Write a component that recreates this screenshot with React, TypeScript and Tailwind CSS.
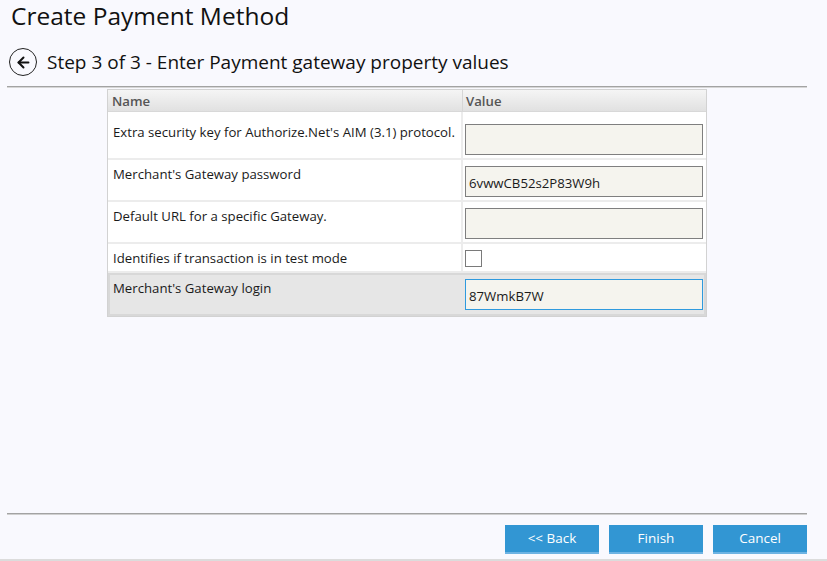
import { ArrowLeft } from "lucide-react";

const rows = [
  { name: "Extra security key for Authorize.Net's AIM (3.1) protocol.", value: "", kind: "text", first: true },
  { name: "Merchant's Gateway password", value: "6vwwCB52s2P83W9h", kind: "text" },
  { name: "Default URL for a specific Gateway.", value: "", kind: "text" },
  { name: "Identifies if transaction is in test mode", value: "", kind: "check" },
  { name: "Merchant's Gateway login", value: "87WmkB7W", kind: "text", selected: true },
];

function Row({ row }: { row: (typeof rows)[number] }) {
  const cellTop = row.first ? "pt-[12px]" : "pt-[6px]";
  if (row.kind === "check") {
    return (
      <div className="flex h-[29px] border-b-2 border-[#ececec] bg-white">
        <div className="w-[355px] shrink-0 border-r-2 border-[#ececec] pl-[5px] pt-[6px]">{row.name}</div>
        <div className="pl-[2px] pt-[6px]">
          <div className="h-[17px] w-[17px] border border-[#7a7a7a] bg-white" />
        </div>
      </div>
    );
  }
  return (
    <div
      className={
        row.selected
          ? "flex h-[43px] border-2 border-[#d8d8d8] bg-[#e6e6e6]"
          : `flex ${row.first ? "h-[48px]" : "h-[42px]"} border-b-2 border-[#ececec] bg-white`
      }
    >
      <div
        className={`shrink-0 ${row.selected ? "w-[353px] pl-[3px] pt-[5px]" : "w-[355px] border-r-2 border-[#ececec] pl-[5px] " + cellTop}`}
      >
        {row.name}
      </div>
      <div className={`pl-[2px] ${row.selected ? "pt-[4px]" : cellTop}`}>
        <div
          className={`flex h-[31px] w-[238px] items-center border bg-[#f5f4ee] px-[3px] pt-[2px] ${row.selected ? "border-[#2f9ade]" : "border-[#7f7f7f]"}`}
        >
          {row.value}
        </div>
      </div>
    </div>
  );
}

export default function App() {
  return (
    <div className="flex h-[561px] w-[827px] flex-col bg-[#f9f9fe] text-[#111] [font-family:'Open_Sans',sans-serif]">
      <h1 className="pl-[11px] pt-[1px] text-[24.5px] leading-[30px] text-[#111]">Create Payment Method</h1>
      <div className="flex items-center gap-[10px] pl-[9px] pt-[17px]">
        <span className="grid h-[28px] w-[28px] place-items-center rounded-full border-[1.5px] border-[#222]">
          <ArrowLeft size={17} strokeWidth={2.8} />
        </span>
        <span className="text-[19px] leading-[26px]">Step 3 of 3 - Enter Payment gateway property values</span>
      </div>
      <div className="mx-[7px] mt-[10px] h-[2px] w-[800px] border-t border-[#a3a3a3] bg-[#d6d6d6]" />
      <div className="ml-[107px] mt-[1px] w-[600px] border border-[#d2d2d2] bg-white text-[13.2px] leading-[16px] text-[#1a1a1a]">
        <div className="flex h-[22px] border-b border-[#d8d8d8] bg-gradient-to-b from-[#f5f5f5] to-[#e1e1e1] font-semibold text-[#555]">
          <div className="w-[355px] shrink-0 border-r border-[#d6d6d6] pl-[4px] pt-[3px]">Name</div>
          <div className="pl-[3px] pt-[3px]">Value</div>
        </div>
        {rows.map((r) => (
          <Row key={r.name} row={r} />
        ))}
      </div>
      <div className="flex-1" />
      <div className="mx-[7px] h-[2px] w-[800px] border-t border-[#a3a3a3] bg-[#d0d0d0]" />
      <div className="flex justify-end gap-[10px] pr-[20px] pt-[10px]">
        {["<< Back", "Finish", "Cancel"].map((b) => (
          <button
            key={b}
            className="h-[29px] w-[94px] border-b-2 border-[#6db3e3] bg-[#3296d3] text-[13.5px] text-white"
          >
            {b}
          </button>
        ))}
      </div>
      <div className="mt-[5px] h-[2px] bg-[#dcdcdc]" />
    </div>
  );
}
